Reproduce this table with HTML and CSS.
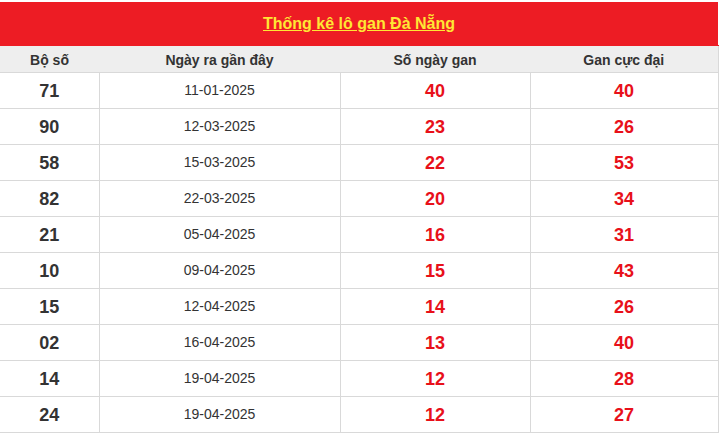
FILE: index.html
```html
<!DOCTYPE html>
<html lang="vi">
<head>
<meta charset="utf-8">
<title>Thống kê lô gan Đà Nẵng</title>
<link rel="stylesheet" href="styles.css">
</head>
<body>
<div class="wrap">
<table class="gan">
  <colgroup>
    <col class="c1"><col class="c2"><col class="c3"><col class="c4">
  </colgroup>
  <thead>
    <tr><th colspan="4" class="title"><a href="#">Thống kê lô gan Đà Nẵng</a></th></tr>
    <tr class="head"><th>Bộ số</th><th>Ngày ra gần đây</th><th>Số ngày gan</th><th>Gan cực đại</th></tr>
  </thead>
  <tbody>
    <tr><td class="num">71</td><td class="date">11-01-2025</td><td class="red">40</td><td class="red">40</td></tr>
    <tr><td class="num">90</td><td class="date">12-03-2025</td><td class="red">23</td><td class="red">26</td></tr>
    <tr><td class="num">58</td><td class="date">15-03-2025</td><td class="red">22</td><td class="red">53</td></tr>
    <tr><td class="num">82</td><td class="date">22-03-2025</td><td class="red">20</td><td class="red">34</td></tr>
    <tr><td class="num">21</td><td class="date">05-04-2025</td><td class="red">16</td><td class="red">31</td></tr>
    <tr><td class="num">10</td><td class="date">09-04-2025</td><td class="red">15</td><td class="red">43</td></tr>
    <tr><td class="num">15</td><td class="date">12-04-2025</td><td class="red">14</td><td class="red">26</td></tr>
    <tr><td class="num">02</td><td class="date">16-04-2025</td><td class="red">13</td><td class="red">40</td></tr>
    <tr><td class="num">14</td><td class="date">19-04-2025</td><td class="red">12</td><td class="red">28</td></tr>
    <tr><td class="num">24</td><td class="date">19-04-2025</td><td class="red">12</td><td class="red">27</td></tr>
  </tbody>
</table>
</div>
</body>
</html>
```
FILE: styles.css
```css
html, body {
  margin: 0;
  padding: 0;
  background: #fff;
}
body {
  font-family: "Liberation Sans", Arial, sans-serif;
  color: #333;
}
.wrap {
  padding-top: 2px;
  width: 718px;
}
.gan {
  width: 718px;
  border-collapse: collapse;
  table-layout: fixed;
}
.c1 { width: 99px; }
.c2 { width: 241px; }
.c3 { width: 190px; }
.c4 { width: 188px; }
.title {
  background: #ed1c24;
  height: 43px;
  padding: 0;
  text-align: center;
  vertical-align: middle;
  border-bottom: 1px solid #ed1c24;
}
.title a {
  color: #ffe734;
  font-size: 16px;
  font-weight: bold;
  text-decoration: underline;
}
.head th {
  background: #eeeeee;
  height: 24px;
  padding: 2px 0 0;
  font-size: 14px;
  font-weight: bold;
  color: #333;
  text-align: center;
  border-bottom: 1px solid #d9d9d9;
}
.gan td {
  height: 33px;
  padding: 2px 0 0;
  text-align: center;
  vertical-align: middle;
  border-bottom: 1px solid #d9d9d9;
  border-left: 1px solid #d9d9d9;
}
.gan td:first-child { border-left: none; }
.gan td:last-child { border-right: 1px solid #d9d9d9; }
.head th:last-child { border-right: 1px solid #d9d9d9; }
.num {
  font-size: 18px;
  font-weight: bold;
  color: #333;
}
.gan td.date {
  padding: 0 0 1px;
  font-size: 14px;
  color: #333;
}
.red {
  font-size: 18px;
  font-weight: bold;
  color: #e8101a;
}
```
